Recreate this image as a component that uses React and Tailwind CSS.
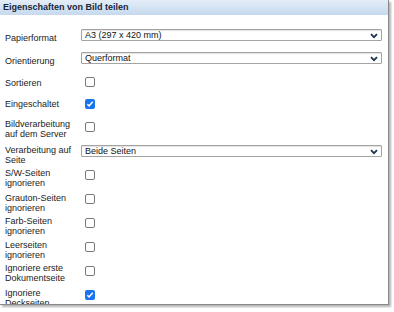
import React from 'react';

const Chevron = () => (
    <svg width="8" height="6" viewBox="0 0 8 6" className="absolute right-[3px] top-[3px]">
        <path d="M1 1.2 L4 4.2 L7 1.2" fill="none" stroke="#1e3350" strokeWidth="1.8" />
    </svg>
);

const Select = ({ value }) => (
    <div className="relative h-[12px] w-[301px] shrink-0 rounded-[1px] border border-[#a3a3a3] bg-white shadow-[inset_0_1px_1px_rgba(0,0,0,0.12)]">
        <span className="absolute left-[3px] top-[0px] text-[9px] leading-[10px] text-[#111]">{value}</span>
        <Chevron />
    </div>
);

const Checkbox = ({ checked }) =>
    checked ? (
        <div className="ml-[4px] flex h-[10px] w-[10px] items-center justify-center rounded-[2px] bg-[#1a73f0]">
            <svg width="8" height="8" viewBox="0 0 8 8">
                <path d="M1.3 4.2 L3.1 5.9 L6.7 1.8" fill="none" stroke="white" strokeWidth="1.5" />
            </svg>
        </div>
    ) : (
        <div className="ml-[4px] h-[10px] w-[10px] rounded-[2px] border border-[#7a7a7a] bg-white"></div>
    );

const rows = [
    { label: ['Papierformat'], select: 'A3 (297 x 420 mm)', row: 'h-[22px]', lab: 'pt-[6px]' },
    { label: ['Orientierung'], select: 'Querformat', row: 'h-[23px] mb-[2px]', lab: 'pt-[7px]' },
    { label: ['Sortieren'], checked: false, row: 'h-[22px]', lab: 'pt-[2px]' },
    { label: ['Eingeschaltet'], checked: true, row: 'h-[22px]' },
    { label: ['Bildverarbeitung', 'auf dem Server'], checked: false, row: 'h-[24px]', lab: 'pt-[3px]' },
    { label: ['Verarbeitung auf', 'Seite'], select: 'Beide Seiten', row: 'h-[24px]', lab: 'pt-[7px]' },
    { label: ['S/W-Seiten', 'ignorieren'], checked: false, row: 'h-[24px]', lab: 'pt-[5px]' },
    { label: ['Grauton-Seiten', 'ignorieren'], checked: false, row: 'h-[24px]', lab: 'pt-[7px]' },
    { label: ['Farb-Seiten', 'ignorieren'], checked: false, row: 'h-[24px]', lab: 'pt-[5px]' },
    { label: ['Leerseiten', 'ignorieren'], checked: false, row: 'h-[24px]', lab: 'pt-[5px]' },
    { label: ['Ignoriere erste', 'Dokumentseite'], checked: false, row: 'h-[24px]', lab: 'pt-[4px]' },
    { label: ['Ignoriere', 'Deckseiten'], checked: true, row: 'h-[24px]', lab: 'pt-[6px]' },
];

const App = () => {
    return (
        <div className="h-[312px] w-[394px] overflow-hidden bg-white font-['Liberation_Sans',Arial,sans-serif]">
            <div className="h-[305px] w-[389px] overflow-hidden border-r border-b border-[#8a8a8a] bg-white shadow-[2px_2px_2px_rgba(0,0,0,0.3)]">
                <div className="h-[15px] bg-gradient-to-b from-[#e4edf8] to-[#c6d9ee] pl-[3px] text-[9px] font-bold leading-[15px] text-[#18263a]">
                    Eigenschaften von Bild teilen
                </div>
                <div className="flex flex-col pt-[9px]">
                    {rows.map((r, i) => (
                        <div key={i} className={`flex items-center ${r.row}`}>
                            <div className={`w-[81px] shrink-0 pl-[5px] text-[9px] leading-[10px] text-[#1b1b1b] ${r.lab || ''}`}>
                                {r.label.map((l, j) => (
                                    <div key={j}>{l}</div>
                                ))}
                            </div>
                            {r.select ? <Select value={r.select} /> : <Checkbox checked={r.checked} />}
                        </div>
                    ))}
                </div>
            </div>
        </div>
    );
};

export default App;
